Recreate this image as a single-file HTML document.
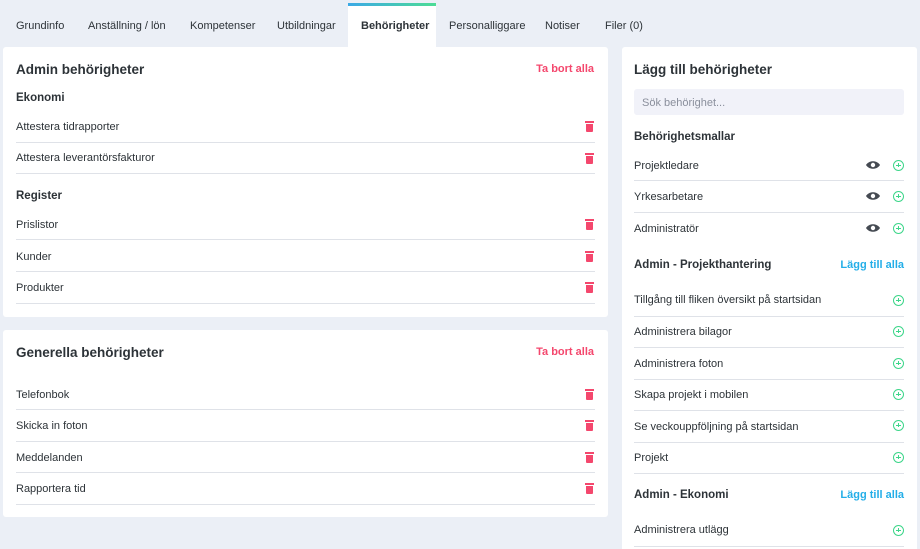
<!DOCTYPE html>
<html><head><meta charset="utf-8"><style>
*{box-sizing:border-box;margin:0;padding:0}
html,body{width:920px;height:549px;overflow:hidden}
body{background:#ebeff6;font-family:"Liberation Sans",sans-serif;color:#2d3338;position:relative}
.a{position:absolute;white-space:nowrap}
.tab{font-size:11px;top:20px;color:#2d3338}
.card{position:absolute;background:#fff;border-radius:3px}
.h{font-size:13.5px;font-weight:bold}
.sh{font-size:11.5px;font-weight:bold}
.it{font-size:11px}
.ln{position:absolute;height:1px;background:#dfe2e8}
.red{color:#f4476d;font-size:11px;font-weight:bold;text-align:right}
.blue{color:#23aee8;font-size:11px;font-weight:bold;text-align:right}
.tr{position:absolute;width:9px;height:11px}
.tr:before{content:"";position:absolute;left:0;top:0;width:9px;height:2px;background:#f4476d}
.tr:after{content:"";position:absolute;left:1px;top:3px;width:7px;height:8px;background:#f4476d;border-radius:0 0 1px 1px}
.pl{position:absolute;width:11px;height:11px;border:1.3px solid #3ed68a;border-radius:50%}
.pl:before{content:"";position:absolute;left:2px;top:3.5px;width:4.5px;height:1.3px;background:#3ed68a}
.pl:after{content:"";position:absolute;left:3.6px;top:1.9px;width:1.3px;height:4.5px;background:#3ed68a}
</style></head><body>
<div class="card" style="left:348px;top:3px;width:88px;height:50px;border-radius:3px 3px 0 0"></div>
<div class="a" style="left:348px;top:3px;width:88px;height:3px;background:linear-gradient(90deg,#3ba9e6,#4ddc95)"></div>
<div class="a tab" style="left:16px">Grundinfo</div>
<div class="a tab" style="left:88px">Anställning / lön</div>
<div class="a tab" style="left:190px">Kompetenser</div>
<div class="a tab" style="left:277px">Utbildningar</div>
<div class="a tab" style="left:361px;font-weight:bold">Behörigheter</div>
<div class="a tab" style="left:449px">Personalliggare</div>
<div class="a tab" style="left:545px">Notiser</div>
<div class="a tab" style="left:605px">Filer (0)</div>

<div class="card" style="left:3px;top:47px;width:605px;height:270px"></div>
<div class="a h" style="left:16px;top:62px">Admin behörigheter</div>
<div class="a red" style="right:326px;top:63px">Ta bort alla</div>
<div class="a sh" style="left:16px;top:92px">Ekonomi</div>
<div class="a it" style="left:16px;top:121px">Attestera tidrapporter</div><div class="tr" style="left:585px;top:121px"></div>
<div class="ln" style="left:16px;top:142px;width:579px"></div>
<div class="a it" style="left:16px;top:152px">Attestera leverantörsfakturor</div><div class="tr" style="left:585px;top:153px"></div>
<div class="ln" style="left:16px;top:173px;width:579px"></div>
<div class="a sh" style="left:16px;top:190px">Register</div>
<div class="a it" style="left:16px;top:219px">Prislistor</div><div class="tr" style="left:585px;top:219px"></div>
<div class="ln" style="left:16px;top:239px;width:579px"></div>
<div class="a it" style="left:16px;top:251px">Kunder</div><div class="tr" style="left:585px;top:251px"></div>
<div class="ln" style="left:16px;top:271px;width:579px"></div>
<div class="a it" style="left:16px;top:282px">Produkter</div><div class="tr" style="left:585px;top:282px"></div>
<div class="ln" style="left:16px;top:303px;width:579px"></div>

<div class="card" style="left:3px;top:330px;width:605px;height:187px"></div>
<div class="a h" style="left:16px;top:345px">Generella behörigheter</div>
<div class="a red" style="right:326px;top:346px">Ta bort alla</div>
<div class="a it" style="left:16px;top:389px">Telefonbok</div><div class="tr" style="left:585px;top:389px"></div>
<div class="ln" style="left:16px;top:409px;width:579px"></div>
<div class="a it" style="left:16px;top:420px">Skicka in foton</div><div class="tr" style="left:585px;top:420px"></div>
<div class="ln" style="left:16px;top:441px;width:579px"></div>
<div class="a it" style="left:16px;top:452px">Meddelanden</div><div class="tr" style="left:585px;top:452px"></div>
<div class="ln" style="left:16px;top:472px;width:579px"></div>
<div class="a it" style="left:16px;top:483px">Rapportera tid</div><div class="tr" style="left:585px;top:483px"></div>
<div class="ln" style="left:16px;top:504px;width:579px"></div>

<div class="card" style="left:622px;top:47px;width:295px;height:502px;border-radius:3px 3px 0 0"></div>
<div class="a h" style="left:634px;top:62px">Lägg till behörigheter</div>
<div class="a" style="left:634px;top:89px;width:270px;height:26px;background:#f1f2f9;border-radius:3px"></div>
<div class="a it" style="left:642px;top:97px;color:#8a8f9c">Sök behörighet...</div>
<div class="a sh" style="left:634px;top:131px">Behörighetsmallar</div>

<div class="a it" style="left:634px;top:160px">Projektledare</div>
<div class="ln" style="left:634px;top:180px;width:270px"></div>
<div class="a it" style="left:634px;top:191px">Yrkesarbetare</div>
<div class="ln" style="left:634px;top:212px;width:270px"></div>
<div class="a it" style="left:634px;top:223px">Administratör</div>

<svg class="a" style="left:866px;top:160px" width="14" height="80" viewBox="0 0 14 80">
<g fill="#454a52"><path d="M0 5c3-5 11-5 14 0c-3 5-11 5-14 0z"/><path d="M0 36c3-5 11-5 14 0c-3 5-11 5-14 0z"/><path d="M0 68c3-5 11-5 14 0c-3 5-11 5-14 0z"/></g>
<g fill="#fff"><circle cx="7" cy="5" r="2.2"/><circle cx="7" cy="36" r="2.2"/><circle cx="7" cy="68" r="2.2"/></g>
</svg>
<div class="pl" style="left:893px;top:160px"></div>
<div class="pl" style="left:893px;top:191px"></div>
<div class="pl" style="left:893px;top:223px"></div>

<div class="a sh" style="left:634px;top:259px">Admin - Projekthantering</div>
<div class="a blue" style="right:16px;top:259px">Lägg till alla</div>
<div class="a it" style="left:634px;top:294px">Tillgång till fliken översikt på startsidan</div><div class="pl" style="left:893px;top:295px"></div>
<div class="ln" style="left:634px;top:316px;width:270px"></div>
<div class="a it" style="left:634px;top:326px">Administrera bilagor</div><div class="pl" style="left:893px;top:326px"></div>
<div class="ln" style="left:634px;top:347px;width:270px"></div>
<div class="a it" style="left:634px;top:358px">Administrera foton</div><div class="pl" style="left:893px;top:358px"></div>
<div class="ln" style="left:634px;top:379px;width:270px"></div>
<div class="a it" style="left:634px;top:389px">Skapa projekt i mobilen</div><div class="pl" style="left:893px;top:389px"></div>
<div class="ln" style="left:634px;top:410px;width:270px"></div>
<div class="a it" style="left:634px;top:421px">Se veckouppföljning på startsidan</div><div class="pl" style="left:893px;top:420px"></div>
<div class="ln" style="left:634px;top:442px;width:270px"></div>
<div class="a it" style="left:634px;top:452px">Projekt</div><div class="pl" style="left:893px;top:452px"></div>
<div class="ln" style="left:634px;top:473px;width:270px"></div>
<div class="a sh" style="left:634px;top:489px">Admin - Ekonomi</div>
<div class="a blue" style="right:16px;top:489px">Lägg till alla</div>
<div class="a it" style="left:634px;top:524px">Administrera utlägg</div><div class="pl" style="left:893px;top:525px"></div>
<div class="ln" style="left:634px;top:546px;width:270px"></div>
</body></html>
